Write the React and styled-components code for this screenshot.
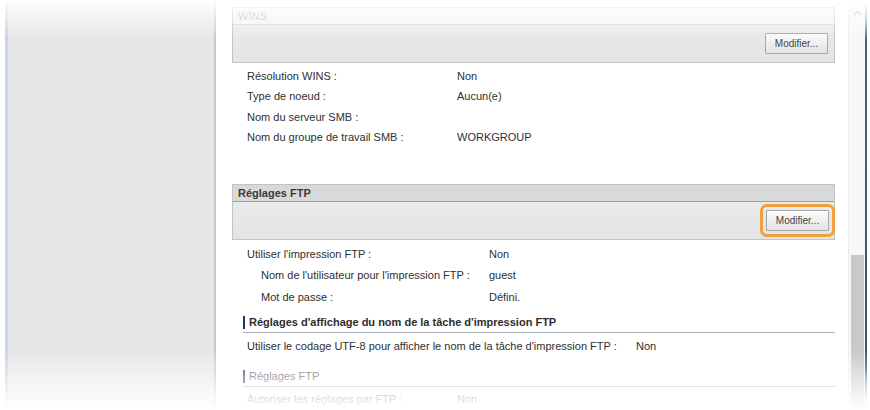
import React from "react";
import styled, { createGlobalStyle } from "styled-components";

const GlobalStyle = createGlobalStyle`
  html, body {
    margin: 0;
    padding: 0;
    background: #ffffff;
  }
  body {
    font-family: "Liberation Sans", Arial, sans-serif;
    font-size: 11px;
    color: #333;
  }
`;

const Screen = styled.div`
  position: relative;
  width: 870px;
  height: 410px;
  overflow: hidden;
  display: flex;
  background: #fff;
`;

const Fade = styled.div`
  position: absolute;
  inset: 0;
  pointer-events: none;
  background: linear-gradient(
    to bottom,
    rgba(255, 255, 255, 0.95) 0px,
    rgba(255, 255, 255, 0.6) 14px,
    rgba(255, 255, 255, 0) 38px,
    rgba(255, 255, 255, 0) 350px,
    rgba(255, 255, 255, 0.5) 378px,
    rgba(255, 255, 255, 0.85) 400px,
    rgba(255, 255, 255, 1) 410px
  );
`;

const SideEdge = styled.div`
  width: 3px;
  margin-left: 5px;
  background: #c6d6ea;
`;

const SidePane = styled.div`
  width: 206px;
  background: #e7e7e7;
  border-right: 2px solid #c9c9c9;
`;

const Main = styled.div`
  width: 603px;
  padding: 7px 13px 0 16px;
  display: flex;
  flex-direction: column;
`;

const Box = styled.div`
  border: 1px solid #c3c3c3;
  background: #e6e8ea;
`;

const BoxTitle = styled.div`
  height: 16px;
  line-height: 16px;
  padding-left: 5px;
  font-size: 11px;
  font-weight: ${(p) => (p.$strong ? "bold" : "normal")};
  color: ${(p) => (p.$strong ? "#3a3a3a" : "#b0b0b0")};
  background: ${(p) => (p.$strong ? "#d9d9d9" : "#f3f3f3")};
  border-bottom: 1px solid ${(p) => (p.$strong ? "#9e9e9e" : "#d0d0d0")};
`;

const BoxBody = styled.div`
  height: 37px;
  display: flex;
  align-items: center;
  justify-content: flex-end;
  padding-right: 6px;
  background: linear-gradient(to bottom, #e8eaec, #e2e4e6);
`;

const Button = styled.button`
  width: 63px;
  height: 21px;
  padding: 0;
  font-family: "Liberation Sans", Arial, sans-serif;
  font-size: 10px;
  color: #444;
  border: 1px solid #a6a6a6;
  border-radius: 1px;
  background: linear-gradient(to bottom, #fbfbfb, #e3e3e3);
`;

const Highlight = styled.span`
  display: inline-flex;
  margin: -7px;
  padding: 3px;
  border: 3px solid #f0a23a;
  border-radius: 7px;
`;

const Rows = styled.div`
  display: flex;
  flex-direction: column;
  padding-top: ${(p) => p.$top || 0}px;
`;

const Row = styled.div`
  display: grid;
  grid-template-columns: ${(p) => p.$label}px auto;
  height: ${(p) => p.$h || 20}px;
  align-items: center;
  padding-left: ${(p) => 15 + (p.$indent || 0)}px;
  color: #2f2f2f;
  white-space: nowrap;
`;

const Spacer = styled.div`
  height: ${(p) => p.$h}px;
  flex-shrink: 0;
`;

const SectionHead = styled.div`
  display: flex;
  align-items: center;
  height: 20px;
  margin-left: 11px;
  border-bottom: 1px solid #a9b0b8;
  font-weight: ${(p) => (p.$light ? "normal" : "bold")};
  color: ${(p) => (p.$light ? "#555" : "#2e2e2e")};
  &::before {
    content: "";
    width: 2px;
    height: 13px;
    margin-right: 4px;
    background: #1f3a66;
  }
`;

const ScrollBar = styled.div`
  width: 16px;
  display: flex;
  flex-direction: column;
  align-items: center;
  background: #f7f7f7;
  border-left: 1px solid #ececec;
`;

const Arrow = styled.svg`
  margin-top: 10px;
  flex-shrink: 0;
`;

const Thumb = styled.div`
  margin-top: auto;
  width: 13px;
  height: 155px;
  background: #c9c9c9;
`;

const RightEdge = styled.div`
  width: 2px;
  background: linear-gradient(to bottom, #dfe6ec, #3c6684 10%, #2f5878 90%, #dfe6ec);
`;

export default function App() {
  return (
    <>
      <GlobalStyle />
      <Screen>
        <SideEdge />
        <SidePane />
        <Main>
          <Box>
            <BoxTitle>WINS</BoxTitle>
            <BoxBody>
              <Button>Modifier...</Button>
            </BoxBody>
          </Box>
          <Rows $top={3}>
            <Row $label={210}>
              <span>Résolution WINS :</span>
              <span>Non</span>
            </Row>
            <Row $label={210}>
              <span>Type de noeud :</span>
              <span>Aucun(e)</span>
            </Row>
            <Row $label={210} $h={21}>
              <span>Nom du serveur SMB :</span>
              <span></span>
            </Row>
            <Row $label={210}>
              <span>Nom du groupe de travail SMB :</span>
              <span>WORKGROUP</span>
            </Row>
          </Rows>
          <Spacer $h={37} />
          <Box>
            <BoxTitle $strong>Réglages FTP</BoxTitle>
            <BoxBody>
              <Highlight>
                <Button>Modifier...</Button>
              </Highlight>
            </BoxBody>
          </Box>
          <Rows $top={4}>
            <Row $label={242}>
              <span>Utiliser l'impression FTP :</span>
              <span>Non</span>
            </Row>
            <Row $label={228} $indent={14} $h={22}>
              <span>Nom de l'utilisateur pour l'impression FTP :</span>
              <span>guest</span>
            </Row>
            <Row $label={228} $indent={14} $h={22}>
              <span>Mot de passe :</span>
              <span>Défini.</span>
            </Row>
          </Rows>
          <Spacer $h={4} />
          <SectionHead>Réglages d'affichage du nom de la tâche d'impression FTP</SectionHead>
          <Rows $top={3}>
            <Row $label={389}>
              <span>Utiliser le codage UTF-8 pour afficher le nom de la tâche d'impression FTP :</span>
              <span>Non</span>
            </Row>
          </Rows>
          <Spacer $h={10} />
          <SectionHead $light>Réglages FTP</SectionHead>
          <Rows $top={3}>
            <Row $label={210} $h={18}>
              <span>Autoriser les réglages par FTP :</span>
              <span>Non</span>
            </Row>
          </Rows>
        </Main>
        <ScrollBar>
          <Arrow width="9" height="6" viewBox="0 0 9 6">
            <path d="M1 5 L4.5 1.5 L8 5" fill="none" stroke="#a8a8a8" strokeWidth="1.2" />
          </Arrow>
          <Thumb />
        </ScrollBar>
        <RightEdge />
        <Fade />
      </Screen>
    </>
  );
}
